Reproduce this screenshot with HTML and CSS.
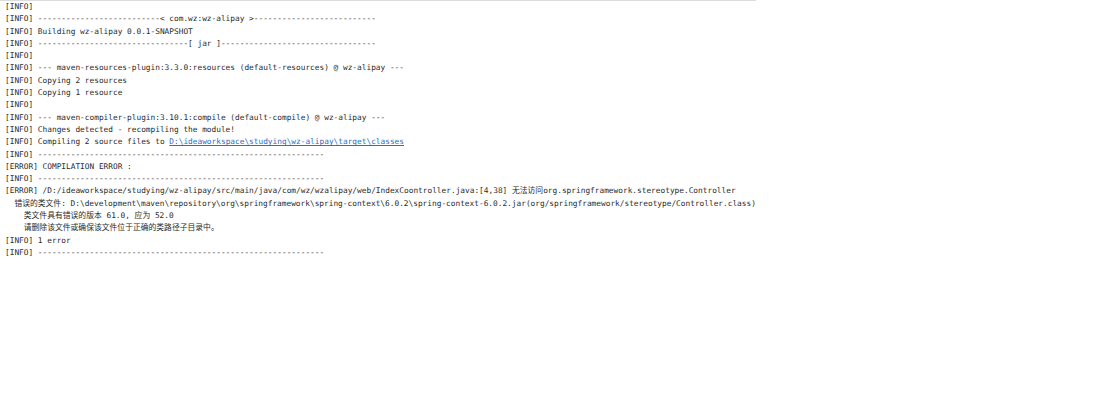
FILE: index.html
```html
<!DOCTYPE html>
<html lang="zh-CN">

<head>
    <meta charset="UTF-8">
    <meta name="viewport" content="width=device-width, initial-scale=1.0">
    <title>控制台输出</title>
    <link rel="stylesheet" href="styles.css">
</head>

<body>
    <div id="console">
        <div class="line">[INFO]</div>
        <div class="line">[INFO] --------------------------&lt; com.wz:wz-alipay &gt;--------------------------</div>
        <div class="line">[INFO] Building wz-alipay 0.0.1-SNAPSHOT</div>
        <div class="line">[INFO] --------------------------------[ jar ]---------------------------------</div>
        <div class="line">[INFO]</div>
        <div class="line">[INFO] --- maven-resources-plugin:3.3.0:resources (default-resources) @ wz-alipay ---</div>
        <div class="line">[INFO] Copying 2 resources</div>
        <div class="line">[INFO] Copying 1 resource</div>
        <div class="line">[INFO]</div>
        <div class="line">[INFO] --- maven-compiler-plugin:3.10.1:compile (default-compile) @ wz-alipay ---</div>
        <div class="line">[INFO] Changes detected - recompiling the module!</div>
        <div class="line">[INFO] Compiling 2 source files to <a class="link" href="#">D:\ideaworkspace\studying\wz-alipay\target\classes</a></div>
        <div class="line">[INFO] -------------------------------------------------------------</div>
        <div class="line">[ERROR] COMPILATION ERROR :</div>
        <div class="line">[INFO] -------------------------------------------------------------</div>
        <div class="line">[ERROR] /D:/ideaworkspace/studying/wz-alipay/src/main/java/com/wz/wzalipay/web/IndexCoontroller.java:[4,38] 无法访问org.springframework.stereotype.Controller</div>
        <div class="line">  错误的类文件: D:\development\maven\repository\org\springframework\spring-context\6.0.2\spring-context-6.0.2.jar(org/springframework/stereotype/Controller.class)</div>
        <div class="line">    类文件具有错误的版本 61.0, 应为 52.0</div>
        <div class="line">    请删除该文件或确保该文件位于正确的类路径子目录中。</div>
        <div class="line">[INFO] 1 error</div>
        <div class="line">[INFO] -------------------------------------------------------------</div>
    </div>
</body>

</html>
```

FILE: styles.css
```css
* {
    padding: 0;
    margin: 0;
}

body {
    background-color: #fff;
}

#console {
    width: 756px;
    border-top: 1px solid #dcdcdc;
    padding: 0 5px;
    box-sizing: border-box;
    font-family: "DejaVu Sans Mono", "Noto Sans CJK SC", monospace;
    font-size: 7.8px;
    line-height: 12.3px;
    color: #2b2b2b;
}

.line {
    white-space: pre;
    height: 12.3px;
}

.link {
    color: #2f6fbf;
    text-decoration: underline;
}
```
